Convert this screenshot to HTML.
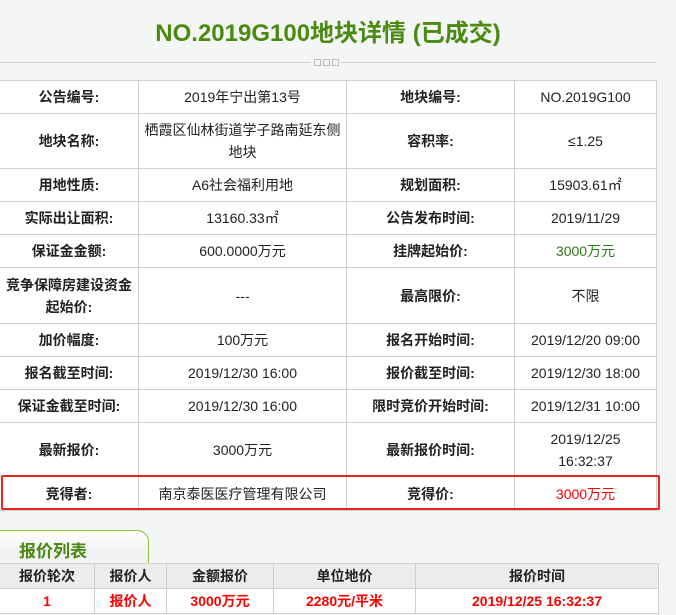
<!DOCTYPE html>
<html><head><meta charset="utf-8"><style>
body{margin:0;width:676px;height:615px;background:#f4f5f5;font-family:"Liberation Sans","Noto Sans CJK SC",sans-serif;overflow:hidden;position:relative;color:#222}
h1{position:absolute;top:16px;left:0;width:656px;margin:0;text-align:center;font-size:24px;color:#4a8a10;font-weight:bold;line-height:36px}
.hr{position:absolute;top:62px;left:0;width:656px;height:1px;background:#d0d0d0}
.sq{position:absolute;top:58px;left:311px;width:30px;height:9px;background:#f4f5f5;display:flex;gap:2px;justify-content:center}
.sq i{display:block;width:7px;height:7px;border:1px solid #bbb;box-sizing:border-box;margin-top:1px}
table{border-collapse:collapse;position:absolute;table-layout:fixed;font-size:14px}
td{border:1px solid #cfcfcf;text-align:center;padding:0;line-height:22px;white-space:nowrap}
#t1{top:80px;left:-1px;background:#fff}
#t1 td.l{font-weight:bold}
.red{position:absolute;left:1px;top:475px;width:655px;height:31px;border:2px solid #e8251f;border-radius:2px}
.tab{position:absolute;left:-2px;top:530px;width:149px;height:36px;border:1px solid #8cc63f;border-bottom:none;border-radius:0 12px 0 0;background:linear-gradient(#fff,#f0f0f0 60%,#f4f5f5)}
.tab span{position:absolute;left:20px;top:6px;font-size:17px;color:#4a8a10;font-weight:bold}
#t2{top:563px;left:-1px;font-weight:bold}
#t2 tr.h td{background:#ececec;height:24px}
#t2 tr.b td{background:#fff;color:#f00;height:24px}
</style></head><body>
<h1>NO.2019G100地块详情 (已成交)</h1>
<div class="hr"></div><div class="sq"><i></i><i></i><i></i></div>
<table id="t1">
<colgroup><col style="width:139px"><col style="width:208px"><col style="width:168px"><col style="width:142px"></colgroup>
<tr style="height:33px"><td class="l">公告编号:</td><td>2019年宁出第13号</td><td class="l">地块编号:</td><td>NO.2019G100</td></tr>
<tr style="height:55px"><td class="l">地块名称:</td><td>栖霞区仙林街道学子路南延东侧<br>地块</td><td class="l">容积率:</td><td>≤1.25</td></tr>
<tr style="height:33px"><td class="l">用地性质:</td><td>A6社会福利用地</td><td class="l">规划面积:</td><td>15903.61㎡</td></tr>
<tr style="height:33px"><td class="l">实际出让面积:</td><td>13160.33㎡</td><td class="l">公告发布时间:</td><td>2019/11/29</td></tr>
<tr style="height:33px"><td class="l">保证金金额:</td><td>600.0000万元</td><td class="l">挂牌起始价:</td><td style="color:#2a7a1a">3000万元</td></tr>
<tr style="height:56px"><td class="l">竞争保障房建设资金<br>起始价:</td><td>---</td><td class="l">最高限价:</td><td>不限</td></tr>
<tr style="height:33px"><td class="l">加价幅度:</td><td>100万元</td><td class="l">报名开始时间:</td><td>2019/12/20 09:00</td></tr>
<tr style="height:33px"><td class="l">报名截至时间:</td><td>2019/12/30 16:00</td><td class="l">报价截至时间:</td><td>2019/12/30 18:00</td></tr>
<tr style="height:33px"><td class="l">保证金截至时间:</td><td>2019/12/30 16:00</td><td class="l">限时竞价开始时间:</td><td>2019/12/31 10:00</td></tr>
<tr style="height:54px"><td class="l">最新报价:</td><td>3000万元</td><td class="l">最新报价时间:</td><td>2019/12/25<br>16:32:37</td></tr>
<tr style="height:34px"><td class="l">竞得者:</td><td>南京泰医医疗管理有限公司</td><td class="l">竞得价:</td><td style="color:#f00">3000万元</td></tr>
</table>
<div class="red"></div>
<div class="tab"><span>报价列表</span></div>
<table id="t2">
<colgroup><col style="width:95px"><col style="width:72px"><col style="width:107px"><col style="width:142px"><col style="width:243px"></colgroup>
<tr class="h"><td>报价轮次</td><td>报价人</td><td>金额报价</td><td>单位地价</td><td>报价时间</td></tr>
<tr class="b"><td>1</td><td>报价人</td><td>3000万元</td><td>2280元/平米</td><td>2019/12/25 16:32:37</td></tr>
</table>
</body></html>
